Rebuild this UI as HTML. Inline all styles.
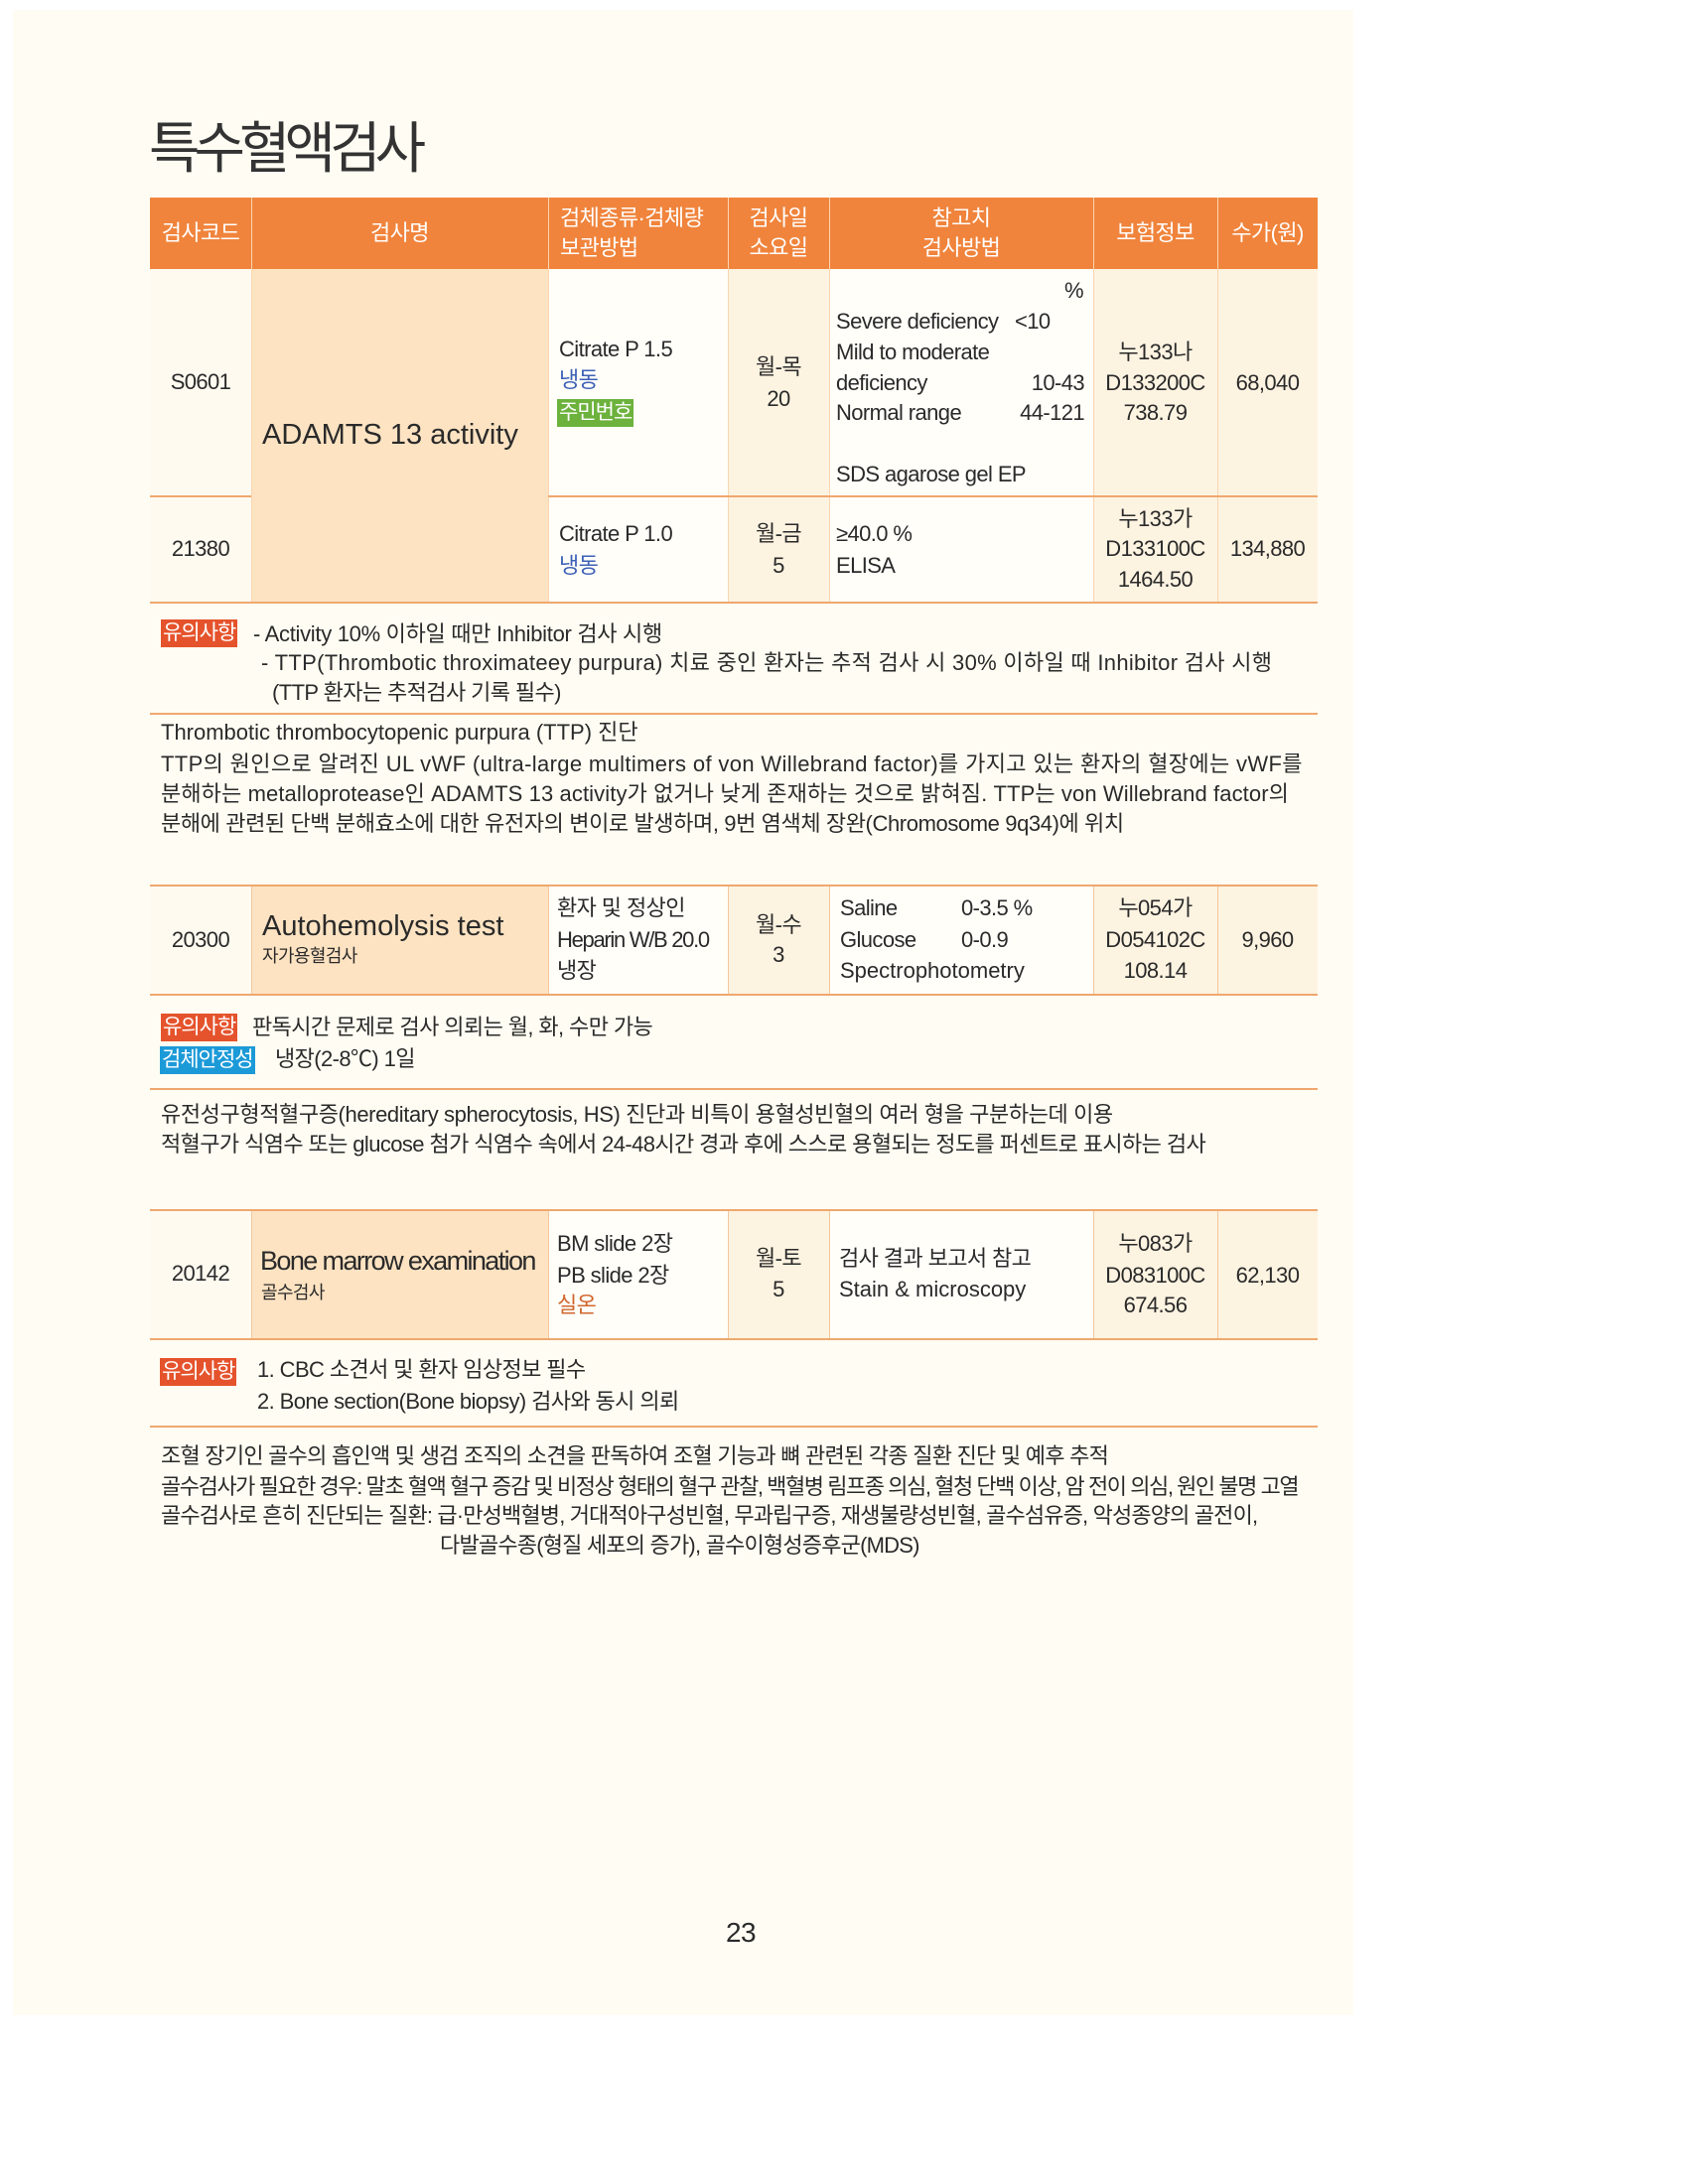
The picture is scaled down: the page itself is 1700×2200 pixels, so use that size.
<!DOCTYPE html>
<html><head><meta charset="utf-8">
<style>
*{margin:0;padding:0;box-sizing:border-box}
body{width:1700px;height:2200px;background:#fff;position:relative;overflow:hidden;font-family:"Liberation Sans","Noto Sans CJK KR",sans-serif;color:#2a2a2a}
.pg{position:absolute;left:13px;top:10px;width:1350px;height:2020px;background:#fffdf3}
.b{position:absolute}
.t{position:absolute;white-space:nowrap;line-height:30px;height:30px;font-size:22px;letter-spacing:-0.6px}
.c{text-align:center}
.r{text-align:right}
.hl{position:absolute;height:2px;background:#efa86e;left:151px;width:1176px}
.vl{position:absolute;width:1px;background:#f3c79c}
.h{color:#fff;font-size:22px}
.tag{position:absolute;color:#fff;font-size:21px;line-height:28px;height:28px;padding:0 2px;letter-spacing:-1px;white-space:nowrap}
.red{background:#e5532c}
.blue{background:#1c9ad8}
.bl{color:#3e61b6}
.or{color:#d0672e}
</style></head><body>
<div class="pg"></div>
<div class="t" style="left:150px;top:118px;height:64px;line-height:64px;font-size:56px;letter-spacing:-6px;color:#333">특수혈액검사</div>

<!-- TABLE 1 -->
<div class="b" style="left:151px;top:199px;width:1176px;height:72px;background:#f0843c"></div>
<div class="b" style="left:151px;top:271px;width:1176px;height:336px;background:#fefaf0"></div>
<div class="b" style="left:253px;top:271px;width:299px;height:336px;background:#fde3c2"></div>
<div class="b" style="left:552px;top:271px;width:181px;height:336px;background:#fffef9"></div>
<div class="b" style="left:733px;top:271px;width:102px;height:336px;background:#fdf3e1"></div>
<div class="b" style="left:835px;top:271px;width:266px;height:336px;background:#fffef9"></div>
<div class="b" style="left:1101px;top:271px;width:226px;height:336px;background:#fdf3e1"></div>
<div class="vl" style="left:253px;top:199px;height:408px;background:#fbd5b0"></div>
<div class="vl" style="left:552px;top:199px;height:408px;background:#fbd5b0"></div>
<div class="vl" style="left:733px;top:199px;height:408px;background:#fbd5b0"></div>
<div class="vl" style="left:835px;top:199px;height:408px;background:#fbd5b0"></div>
<div class="vl" style="left:1101px;top:199px;height:408px;background:#fbd5b0"></div>
<div class="vl" style="left:1226px;top:199px;height:408px;background:#fbd5b0"></div>
<div class="hl" style="top:499px;left:151px;width:102px"></div>
<div class="hl" style="top:499px;left:552px;width:775px"></div>
<div class="hl" style="top:606px"></div>

<div class="t c h" style="left:151px;width:102px;top:220px">검사코드</div>
<div class="t c h" style="left:253px;width:299px;top:220px">검사명</div>
<div class="t h" style="left:564px;top:205px">검체종류·검체량</div>
<div class="t h" style="left:564px;top:235px">보관방법</div>
<div class="t c h" style="left:733px;width:102px;top:205px">검사일</div>
<div class="t c h" style="left:733px;width:102px;top:235px">소요일</div>
<div class="t c h" style="left:835px;width:266px;top:205px">참고치</div>
<div class="t c h" style="left:835px;width:266px;top:235px">검사방법</div>
<div class="t c h" style="left:1101px;width:125px;top:220px">보험정보</div>
<div class="t c h" style="left:1226px;width:101px;top:220px">수가(원)</div>

<div class="t c" style="left:151px;width:102px;top:370px">S0601</div>
<div class="t" style="left:264px;top:421px;font-size:29px;height:34px;line-height:34px;letter-spacing:0">ADAMTS 13 activity</div>
<div class="t" style="left:563px;top:337px">Citrate P 1.5</div>
<div class="t bl" style="left:563px;top:368px">냉동</div>
<div class="tag" style="left:561px;top:402px;background:#6cb23c">주민번호</div>
<div class="t c" style="left:733px;width:102px;top:355px">월-목</div>
<div class="t c" style="left:733px;width:102px;top:387px">20</div>
<div class="t" style="left:1072px;top:278px">%</div>
<div class="t" style="left:842px;top:309px">Severe deficiency &nbsp;&nbsp;&lt;10</div>
<div class="t" style="left:842px;top:340px">Mild to moderate</div>
<div class="t" style="left:842px;top:371px">deficiency</div>
<div class="t r" style="left:980px;width:112px;top:371px">10-43</div>
<div class="t" style="left:842px;top:401px">Normal range</div>
<div class="t r" style="left:980px;width:112px;top:401px">44-121</div>
<div class="t" style="left:842px;top:463px">SDS agarose gel EP</div>
<div class="t c" style="left:1101px;width:125px;top:340px">누133나</div>
<div class="t c" style="left:1101px;width:125px;top:371px">D133200C</div>
<div class="t c" style="left:1101px;width:125px;top:401px">738.79</div>
<div class="t c" style="left:1226px;width:101px;top:371px">68,040</div>

<div class="t c" style="left:151px;width:102px;top:538px">21380</div>
<div class="t" style="left:563px;top:523px">Citrate P 1.0</div>
<div class="t bl" style="left:563px;top:555px">냉동</div>
<div class="t c" style="left:733px;width:102px;top:523px">월-금</div>
<div class="t c" style="left:733px;width:102px;top:555px">5</div>
<div class="t" style="left:842px;top:523px">≥40.0 %</div>
<div class="t" style="left:842px;top:555px">ELISA</div>
<div class="t c" style="left:1101px;width:125px;top:508px">누133가</div>
<div class="t c" style="left:1101px;width:125px;top:538px">D133100C</div>
<div class="t c" style="left:1101px;width:125px;top:569px">1464.50</div>
<div class="t c" style="left:1226px;width:101px;top:538px">134,880</div>

<div class="tag red" style="left:162px;top:624px">유의사항</div>
<div class="t" style="left:255px;top:624px;letter-spacing:-0.3px">- Activity 10% 이하일 때만 Inhibitor 검사 시행</div>
<div class="t" style="left:263px;top:653px;letter-spacing:0.3px">- TTP(Thrombotic throximateey purpura) 치료 중인 환자는 추적 검사 시 30% 이하일 때 Inhibitor 검사 시행</div>
<div class="t" style="left:274px;top:683px">(TTP 환자는 추적검사 기록 필수)</div>
<div class="hl" style="top:718px;height:2px"></div>
<div class="t" style="left:162px;top:723px;letter-spacing:0">Thrombotic thrombocytopenic purpura (TTP) 진단</div>
<div class="t" style="left:162px;top:755px;letter-spacing:0.35px">TTP의 원인으로 알려진 UL vWF (ultra-large multimers of von Willebrand factor)를 가지고 있는 환자의 혈장에는 vWF를</div>
<div class="t" style="left:162px;top:785px;letter-spacing:0.1px">분해하는 metalloprotease인 ADAMTS 13 activity가 없거나 낮게 존재하는 것으로 밝혀짐. TTP는 von Willebrand factor의</div>
<div class="t" style="left:162px;top:815px;letter-spacing:-0.4px">분해에 관련된 단백 분해효소에 대한 유전자의 변이로 발생하며, 9번 염색체 장완(Chromosome 9q34)에 위치</div>

<!-- TABLE 2 -->
<div class="b" style="left:151px;top:892px;width:1176px;height:110px;background:#fefaf0"></div>
<div class="b" style="left:253px;top:892px;width:299px;height:110px;background:#fde3c2"></div>
<div class="b" style="left:552px;top:892px;width:181px;height:110px;background:#fffef9"></div>
<div class="b" style="left:733px;top:892px;width:102px;height:110px;background:#fdf3e1"></div>
<div class="b" style="left:835px;top:892px;width:266px;height:110px;background:#fffef9"></div>
<div class="b" style="left:1101px;top:892px;width:226px;height:110px;background:#fdf3e1"></div>
<div class="vl" style="left:253px;top:892px;height:110px"></div>
<div class="vl" style="left:552px;top:892px;height:110px"></div>
<div class="vl" style="left:733px;top:892px;height:110px"></div>
<div class="vl" style="left:835px;top:892px;height:110px"></div>
<div class="vl" style="left:1101px;top:892px;height:110px"></div>
<div class="vl" style="left:1226px;top:892px;height:110px"></div>
<div class="hl" style="top:891px"></div>
<div class="hl" style="top:1001px"></div>
<div class="t c" style="left:151px;width:102px;top:932px">20300</div>
<div class="t" style="left:264px;top:916px;font-size:29px;height:34px;line-height:34px;letter-spacing:0">Autohemolysis test</div>
<div class="t" style="left:264px;top:951px;font-size:18px;height:24px;line-height:24px">자가용혈검사</div>
<div class="t" style="left:561px;top:900px">환자 및 정상인</div>
<div class="t" style="left:561px;top:932px;letter-spacing:-1.3px">Heparin W/B 20.0</div>
<div class="t" style="left:561px;top:963px">냉장</div>
<div class="t c" style="left:733px;width:102px;top:917px">월-수</div>
<div class="t c" style="left:733px;width:102px;top:947px">3</div>
<div class="t" style="left:846px;top:900px">Saline</div>
<div class="t" style="left:968px;top:900px">0-3.5 %</div>
<div class="t" style="left:846px;top:932px">Glucose</div>
<div class="t" style="left:968px;top:932px">0-0.9</div>
<div class="t" style="left:846px;top:963px;letter-spacing:0">Spectrophotometry</div>
<div class="t c" style="left:1101px;width:125px;top:900px">누054가</div>
<div class="t c" style="left:1101px;width:125px;top:932px">D054102C</div>
<div class="t c" style="left:1101px;width:125px;top:963px">108.14</div>
<div class="t c" style="left:1226px;width:101px;top:932px">9,960</div>

<div class="tag red" style="left:162px;top:1021px">유의사항</div>
<div class="t" style="left:254px;top:1020px">판독시간 문제로 검사 의뢰는 월, 화, 수만 가능</div>
<div class="tag blue" style="left:161px;top:1054px">검체안정성</div>
<div class="t" style="left:277px;top:1052px">냉장(2-8℃) 1일</div>
<div class="hl" style="top:1096px"></div>
<div class="t" style="left:162px;top:1108px;letter-spacing:-0.4px">유전성구형적혈구증(hereditary spherocytosis, HS) 진단과 비특이 용혈성빈혈의 여러 형을 구분하는데 이용</div>
<div class="t" style="left:162px;top:1138px;letter-spacing:-0.6px">적혈구가 식염수 또는 glucose 첨가 식염수 속에서 24-48시간 경과 후에 스스로 용혈되는 정도를 퍼센트로 표시하는 검사</div>

<!-- TABLE 3 -->
<div class="b" style="left:151px;top:1219px;width:1176px;height:130px;background:#fefaf0"></div>
<div class="b" style="left:253px;top:1219px;width:299px;height:130px;background:#fde3c2"></div>
<div class="b" style="left:552px;top:1219px;width:181px;height:130px;background:#fffef9"></div>
<div class="b" style="left:733px;top:1219px;width:102px;height:130px;background:#fdf3e1"></div>
<div class="b" style="left:835px;top:1219px;width:266px;height:130px;background:#fffef9"></div>
<div class="b" style="left:1101px;top:1219px;width:226px;height:130px;background:#fdf3e1"></div>
<div class="vl" style="left:253px;top:1219px;height:130px"></div>
<div class="vl" style="left:552px;top:1219px;height:130px"></div>
<div class="vl" style="left:733px;top:1219px;height:130px"></div>
<div class="vl" style="left:835px;top:1219px;height:130px"></div>
<div class="vl" style="left:1101px;top:1219px;height:130px"></div>
<div class="vl" style="left:1226px;top:1219px;height:130px"></div>
<div class="hl" style="top:1218px"></div>
<div class="hl" style="top:1348px"></div>
<div class="t c" style="left:151px;width:102px;top:1268px">20142</div>
<div class="t" style="left:262px;top:1253px;font-size:27px;height:34px;line-height:34px;letter-spacing:-1.6px">Bone marrow examination</div>
<div class="t" style="left:263px;top:1290px;font-size:18px;height:24px;line-height:24px">골수검사</div>
<div class="t" style="left:561px;top:1238px">BM slide 2장</div>
<div class="t" style="left:561px;top:1270px">PB slide 2장</div>
<div class="t or" style="left:561px;top:1300px">실온</div>
<div class="t c" style="left:733px;width:102px;top:1253px">월-토</div>
<div class="t c" style="left:733px;width:102px;top:1284px">5</div>
<div class="t" style="left:845px;top:1253px">검사 결과 보고서 참고</div>
<div class="t" style="left:845px;top:1284px;letter-spacing:0">Stain &amp; microscopy</div>
<div class="t c" style="left:1101px;width:125px;top:1238px">누083가</div>
<div class="t c" style="left:1101px;width:125px;top:1270px">D083100C</div>
<div class="t c" style="left:1101px;width:125px;top:1300px">674.56</div>
<div class="t c" style="left:1226px;width:101px;top:1270px">62,130</div>

<div class="tag red" style="left:161px;top:1368px">유의사항</div>
<div class="t" style="left:259px;top:1365px">1. CBC 소견서 및 환자 임상정보 필수</div>
<div class="t" style="left:259px;top:1397px">2. Bone section(Bone biopsy) 검사와 동시 의뢰</div>
<div class="hl" style="top:1436px"></div>
<div class="t" style="left:162px;top:1452px;letter-spacing:-0.75px">조혈 장기인 골수의 흡인액 및 생검 조직의 소견을 판독하여 조혈 기능과 뼈 관련된 각종 질환 진단 및 예후 추적</div>
<div class="t" style="left:162px;top:1483px;letter-spacing:-1.45px">골수검사가 필요한 경우: 말초 혈액 혈구 증감 및 비정상 형태의 혈구 관찰, 백혈병 림프종 의심, 혈청 단백 이상, 암 전이 의심, 원인 불명 고열</div>
<div class="t" style="left:162px;top:1512px;letter-spacing:-0.85px">골수검사로 흔히 진단되는 질환: 급·만성백혈병, 거대적아구성빈혈, 무과립구증, 재생불량성빈혈, 골수섬유증, 악성종양의 골전이,</div>
<div class="t" style="left:443px;top:1542px;letter-spacing:-0.8px">다발골수종(형질 세포의 증가), 골수이형성증후군(MDS)</div>

<div class="t" style="left:731px;top:1930px;font-size:28px;height:34px;line-height:34px">23</div>
</body></html>
